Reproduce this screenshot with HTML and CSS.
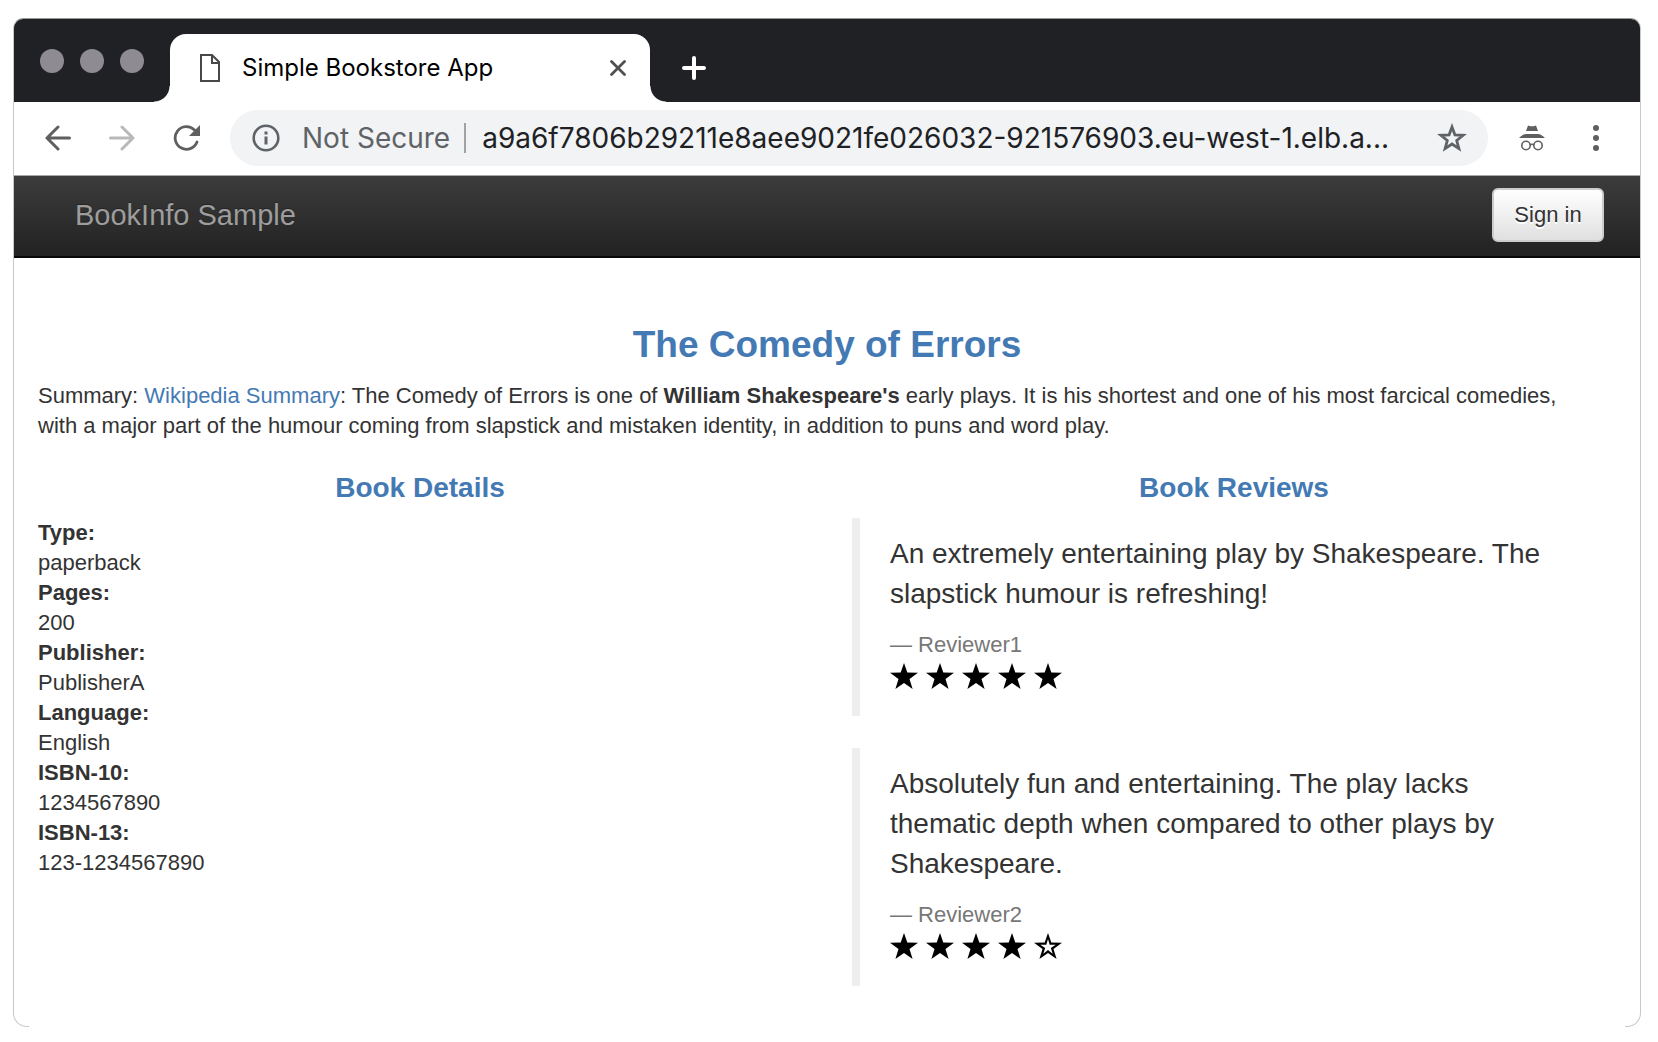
FILE: index.html
```html
<!DOCTYPE html>
<html lang="en">
<head>
<meta charset="utf-8">
<title>Simple Bookstore App</title>
<link rel="stylesheet" href="styles.css">
</head>
<body>
<div class="window">
  <div class="tabstrip">
    <div class="lights"><span class="light"></span><span class="light"></span><span class="light"></span></div>
    <div class="tab">
      <svg class="tab-page" width="20" height="28" viewBox="0 0 20 28" fill="none" stroke="#484848" stroke-width="2"><path d="M1 1H12L19 8V27H1Z"/><path d="M12 1V9H19"/></svg>
      <span class="tab-title">Simple Bookstore App</span>
      <button class="icon-button" aria-label="Close tab"><svg width="16" height="16" viewBox="0 0 16 16" stroke="#505050" stroke-width="2.8" stroke-linecap="round"><path d="M1.5 1.5L14.5 14.5M14.5 1.5L1.5 14.5"/></svg></button>
    </div>
    <button class="icon-button new-tab" aria-label="New tab"><svg width="24" height="24" viewBox="0 0 24 24" stroke="#fff" stroke-width="4" stroke-linecap="round"><path d="M12 2V22M2 12H22"/></svg></button>
  </div>
  <div class="toolbar">
    <div class="nav-buttons">
      <button class="icon-button" aria-label="Back"><svg width="26" height="26" viewBox="0 0 26 26" fill="none" stroke="#5f5f5f" stroke-width="3" stroke-linecap="round" stroke-linejoin="round"><path d="M24.5 13H2M13 2L2 13L13 24"/></svg></button>
      <button class="icon-button" aria-label="Forward"><svg width="26" height="26" viewBox="0 0 26 26" fill="none" stroke="#b9b9b9" stroke-width="3" stroke-linecap="round" stroke-linejoin="round"><path d="M1.5 13H24M13 2L24 13L13 24"/></svg></button>
      <button class="icon-button" aria-label="Reload"><svg width="28" height="26" viewBox="0 0 28 26"><path d="M21.5 5A11.3 11.3 0 1 0 24 17" fill="none" stroke="#5f5f5f" stroke-width="2.8" stroke-linecap="round"/><path d="M27 0V11H16Z" fill="#5f5f5f"/></svg></button>
    </div>
    <div class="omnibox">
      <svg width="28" height="28" viewBox="0 0 28 28"><circle cx="14" cy="14" r="12.3" fill="none" stroke="#5f6368" stroke-width="2.6"/><path d="M12.5 7.5h3v3h-3zM12.5 12.5h3v8h-3z" fill="#5f6368"/></svg>
      <label class="security" for="url">Not Secure</label>
      <input class="url" id="url" type="text" value="a9a6f7806b29211e8aee9021fe026032-921576903.eu-west-1.elb.a...">
      <button class="icon-button" aria-label="Bookmark this page"><svg width="30" height="30" viewBox="0 0 30 30"><path d="M15 4L17.9 11.8L26.2 12.3L19.7 17.5L21.9 25.6L15 21L8.1 25.6L10.3 17.5L3.8 12.3L12.1 11.8Z" fill="none" stroke="#5f6368" stroke-width="2.8"/></svg></button>
    </div>
    <svg class="incognito" width="28" height="26" viewBox="0 0 28 26"><path d="M8 6L10 .5Q12 1.6 14 1.2Q16 1.6 18 .5L20 6ZM1 13Q5 9 8 9H20Q23 9 27 13Z" fill="#5f5f5f"/><g fill="none" stroke="#5f5f5f" stroke-width="1.6"><circle cx="8" cy="20.5" r="4.2"/><circle cx="20" cy="20.5" r="4.2"/><path d="M12 20Q14 18.5 16 20"/></g></svg>
    <button class="icon-button" aria-label="Menu"><svg width="8" height="26" viewBox="0 0 8 26" fill="#5f5f5f"><circle cx="4" cy="3" r="3"/><circle cx="4" cy="13" r="3"/><circle cx="4" cy="23" r="3"/></svg></button>
  </div>
  <nav class="navbar">
    <a class="brand" href="#">BookInfo Sample</a>
    <button class="sign-in">Sign in</button>
  </nav>
  <main class="content">
    <h1 class="title">The Comedy of Errors</h1>
    <p class="summary">Summary: <a href="#">Wikipedia Summary</a>: The Comedy of Errors is one of <b>William Shakespeare's</b> early plays. It is his shortest and one of his most farcical comedies, with a major part of the humour coming from slapstick and mistaken identity, in addition to puns and word play.</p>
    <div class="columns">
      <section>
        <h2 class="heading">Book Details</h2>
        <dl class="details">
          <dt>Type:</dt><dd>paperback</dd>
          <dt>Pages:</dt><dd>200</dd>
          <dt>Publisher:</dt><dd>PublisherA</dd>
          <dt>Language:</dt><dd>English</dd>
          <dt>ISBN-10:</dt><dd>1234567890</dd>
          <dt>ISBN-13:</dt><dd>123-1234567890</dd>
        </dl>
      </section>
      <section>
        <h2 class="heading">Book Reviews</h2>
        <svg class="defs" width="0" height="0"><defs>
          <path id="full" d="M14 0L17.3 9.5L28 9.7L19.5 15.9L22.6 26L14 20L5.4 26L8.5 15.9L0 9.7L10.7 9.5Z"/>
          <path id="empty" fill-rule="evenodd" d="M14 0L17.3 9.5L28 9.7L19.5 15.9L22.6 26L14 20L5.4 26L8.5 15.9L0 9.7L10.7 9.5ZM14 6L12.3 11.7L6.3 11.8L11.2 15L9.3 20.7L14 17.1L18.7 20.7L16.8 15L21.7 11.8L15.7 11.7Z"/>
        </defs></svg>
        <blockquote class="review">
          <p>An extremely entertaining play by Shakespeare. The slapstick humour is refreshing!</p>
          <small>— Reviewer1</small>
          <div class="stars">
            <svg width="28" height="26"><use href="#full"/></svg><svg width="28" height="26"><use href="#full"/></svg><svg width="28" height="26"><use href="#full"/></svg><svg width="28" height="26"><use href="#full"/></svg><svg width="28" height="26"><use href="#full"/></svg>
          </div>
        </blockquote>
        <blockquote class="review">
          <p>Absolutely fun and entertaining. The play lacks thematic depth when compared to other plays by Shakespeare.</p>
          <small>— Reviewer2</small>
          <div class="stars">
            <svg width="28" height="26"><use href="#full"/></svg><svg width="28" height="26"><use href="#full"/></svg><svg width="28" height="26"><use href="#full"/></svg><svg width="28" height="26"><use href="#full"/></svg><svg width="28" height="26"><use href="#empty"/></svg>
          </div>
        </blockquote>
      </section>
    </div>
  </main>
</div>
</body>
</html>
```
FILE: styles.css
```css
* { box-sizing: border-box; }
body {
  margin: 0;
  padding: 18px 17px 14px 13px;
  background: #fff;
  color: #333;
  font: 22px/30px "Liberation Sans", Arial, sans-serif;
}
a { color: #447ab4; text-decoration: none; }
button, input { font: inherit; }
.icon-button { display: flex; padding: 0; border: 0; background: none; }

.window {
  position: relative;
  min-height: calc(100vh - 33px);
  border: 1px solid #c8c8c8;
  border-top-color: #999;
  border-radius: 10px 10px 14px 14px;
}
/* Only the corners of the bottom edge are outlined */
.window::after {
  content: "";
  position: absolute;
  right: 15px;
  bottom: -1px;
  left: 15px;
  height: 1px;
  background: #fff;
}

/* Tab strip */
.tabstrip {
  display: flex;
  align-items: flex-end;
  height: 83px;
  border-radius: 9px 9px 0 0;
  background: #202124;
  font-family: Inter, sans-serif;
}
.lights { display: flex; gap: 16px; padding: 0 26px 29px 26px; }
.light { width: 24px; height: 24px; border-radius: 50%; background: #8e8c92; }
.tab {
  position: relative;
  display: flex;
  align-items: center;
  width: 480px;
  height: 68px;
  padding: 0 24px 0 30px;
  border-radius: 16px 16px 0 0;
  background: #fff;
}
.tab::before, .tab::after {
  content: "";
  position: absolute;
  bottom: 0;
  width: 16px;
  height: 16px;
}
.tab::before { right: 100%; background: radial-gradient(circle at 0 0, transparent 15px, #fff 16px); }
.tab::after { left: 100%; background: radial-gradient(circle at 100% 0, transparent 15px, #fff 16px); }
.tab-title { flex: 1; margin-left: 22px; color: #000; font-size: 24px; }
.new-tab { margin: 0 0 22px 32px; }

/* Toolbar */
.toolbar {
  display: flex;
  align-items: center;
  height: 74px;
  padding: 0 40px 2px 31px;
  border-bottom: 1px solid #a8a8a8;
  font-family: Inter, sans-serif;
  font-size: 28px;
}
.nav-buttons { display: flex; gap: 38px; }
.omnibox {
  display: flex;
  flex: 1;
  align-items: center;
  height: 56px;
  margin: 0 30px 0 29px;
  padding: 0 21px 0 22px;
  border-radius: 28px;
  background: #f1f3f4;
}
.security {
  margin: 0 16px 0 22px;
  padding-right: 14px;
  border-right: 2px solid #a0a2a5;
  color: #5f6368;
}
.url { flex: 1; min-width: 0; padding: 0; border: 0; background: none; color: #202124; }
.incognito { margin-right: 46px; }

/* Page navigation bar */
.navbar {
  display: flex;
  align-items: center;
  justify-content: space-between;
  height: 82px;
  padding: 0 36px 2px 61px;
  border-bottom: 2px solid #080808;
  background: linear-gradient(#3c3c3c, #222);
}
.brand { color: #9d9d9d; font-size: 29px; text-shadow: 0 -1px 0 rgba(0, 0, 0, .3); }
.sign-in {
  width: 112px;
  height: 54px;
  padding: 0;
  border: 2px solid #ccc;
  border-radius: 6px;
  background: linear-gradient(#fff, #e0e0e0);
  color: #333;
  text-shadow: 0 2px 0 #fff;
}

/* Book page */
.content { padding: 65px 24px 8px; }
.title { margin: 0 0 14px; color: #447ab4; font-size: 37px; line-height: 44px; text-align: center; }
.summary { margin: 0 0 30px; padding-right: 24px; }
.columns { display: grid; grid-template-columns: 1fr 1fr; gap: 50px; }
.heading { margin: 0 0 13px; color: #447ab4; font-size: 28px; line-height: 34px; text-align: center; }
.details { margin: 0; }
.details dt { font-weight: bold; }
.details dd { margin: 0; }
.defs { position: absolute; }
.review {
  margin: 0 0 32px;
  padding: 16px 40px 24px 30px;
  border-left: 8px solid #eee;
}
.review p { margin: 0 0 16px; font-size: 28px; line-height: 40px; }
.review small { display: block; color: #777; font-size: 22px; }
.stars { display: flex; gap: 8px; align-items: center; height: 32px; }
```
